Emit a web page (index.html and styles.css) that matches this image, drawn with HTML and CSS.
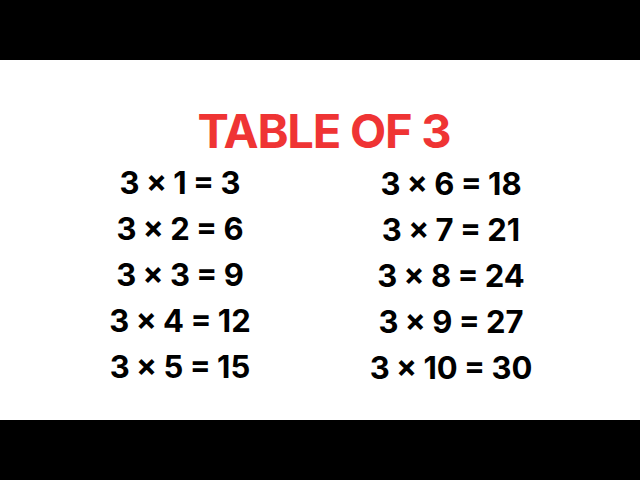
FILE: index.html
```html
<!DOCTYPE html>
<html>
<head>
<meta charset="utf-8">
<link rel="stylesheet" href="styles.css">
</head>
<body>
<div class="bar"></div>
<main class="sheet">
  <h1 class="title">TABLE OF 3</h1>
  <div class="cols">
    <ul class="col col-left">
      <li>3 × 1 = 3</li>
      <li>3 × 2 = 6</li>
      <li>3 × 3 = 9</li>
      <li>3 × 4 = 12</li>
      <li>3 × 5 = 15</li>
    </ul>
    <ul class="col col-right">
      <li>3 × 6 = 18</li>
      <li>3 × 7 = 21</li>
      <li>3 × 8 = 24</li>
      <li>3 × 9 = 27</li>
      <li>3 × 10 = 30</li>
    </ul>
  </div>
</main>
<div class="bar"></div>
</body>
</html>
```

FILE: styles.css
```css
html, body {
  margin: 0;
  padding: 0;
  background: #000;
}
body {
  width: 640px;
  height: 480px;
  display: flex;
  flex-direction: column;
  font-family: Inter, "Open Sans", sans-serif;
}
.bar {
  height: 60px;
  background: #000;
  flex: none;
}
.sheet {
  height: 360px;
  background: #fff;
  flex: none;
  display: flex;
  flex-direction: column;
}
.title {
  margin: 45px 0 0 0;
  padding-left: 8px;
  text-align: center;
  font-size: 47px;
  line-height: 52px;
  font-weight: 700;
  color: #ef3434;
  letter-spacing: -1.2px;
}
.cols {
  display: grid;
  grid-template-columns: 240px 240px;
  column-gap: 31px;
  padding-left: 60px;
  margin-top: 3px;
}
.col {
  list-style: none;
  margin: 0;
  padding: 0;
  text-align: center;
  font-size: 31px;
  font-weight: 700;
  color: #000;
  line-height: 46px;
  word-spacing: -1px;
}
.col-right {
  margin-top: 1px;
}
```
